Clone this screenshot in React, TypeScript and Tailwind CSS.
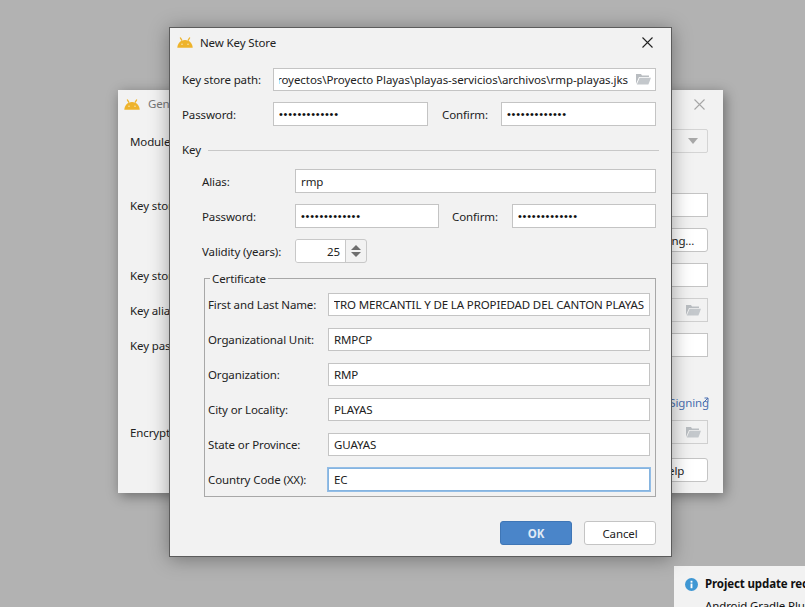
import React from "react";

const font = "font-['Noto_Sans','Open_Sans',sans-serif]";

function Android({ className = "" }: { className?: string }) {
  return (
    <svg viewBox="0 0 16 11" width="16" height="11" className={className}>
      <path d="M0.3 10.7C0.5 6.6 3.5 3 8 3s7.5 3.6 7.7 7.7Z" fill="#eeb32b" />
      <path d="M3.2 0.5 5 3.6M12.8 0.5 11 3.6" stroke="#eeb32b" strokeWidth="1.3" />
      <circle cx="5" cy="7.3" r=".8" fill="#f6e2ae" />
      <circle cx="11" cy="7.3" r=".8" fill="#f6e2ae" />
    </svg>
  );
}

function Close({ color, size = 11 }: { color: string; size?: number }) {
  return (
    <svg viewBox="0 0 11 11" width={size} height={size}>
      <path d="M.5.5l10 10M10.5.5l-10 10" stroke={color} strokeWidth="1.1" />
    </svg>
  );
}

function Folder() {
  return (
    <svg viewBox="0 0 15 12" width="15" height="12">
      <path d="M0 11V1h5l1 1.4h7V4H3L0 11Z" fill="#b9bdc1" />
      <path d="M3.6 4.8H15L12.4 11.5H.8Z" fill="#c4c8cc" />
    </svg>
  );
}

function Field({ children, className = "", focus = false, right = false, tall = true }: { children?: React.ReactNode; className?: string; focus?: boolean; right?: boolean; tall?: boolean }) {
  return (
    <div
      className={`flex items-center ${tall ? "h-[24px] pt-[2px]" : "h-[23px]"} bg-white whitespace-nowrap text-[#222] px-[5px] ${
        focus ? "border border-[#85b4e0] shadow-[0_0_0_1px_#93bde6]" : "border border-[#c4c4c4]"
      } ${className}`}
    >
      <div className={`flex-1 min-w-0 flex overflow-hidden ${right ? "justify-end" : ""}`}>
        <span className="shrink-0">{children}</span>
      </div>
    </div>
  );
}

function Label({ children, className = "", flat = false }: { children: React.ReactNode; className?: string; flat?: boolean }) {
  return <span className={`${flat ? "" : "pt-[2px]"} whitespace-nowrap ${className}`}>{children}</span>;
}

function Dots() {
  return <span className="block -mt-[2px] text-[11px] leading-[14px] tracking-[0.75px] text-[#111] font-['Liberation_Sans',sans-serif]">•••••••••••••</span>;
}

function CertRow({ label, value, focus, right }: { label: string; value: string; focus?: boolean; right?: boolean }) {
  return (
    <div className="flex items-center">
      <Label className="w-[120px]" flat>{label}</Label>
      <Field className="w-[322px]" focus={focus} right={right} tall={false}>{value}</Field>
    </div>
  );
}

function BackRow({ label, mt, children }: { label?: string; mt: string; children?: React.ReactNode }) {
  return (
    <div className={`flex items-center justify-between h-[24px] ${mt}`}>
      <Label>{label}</Label>
      {children}
    </div>
  );
}

function FolderField() {
  return (
    <div className="flex items-center justify-end w-[460px] h-[24px] border border-[#cfcfcf] pr-[6px]">
      <Folder />
    </div>
  );
}

function BackDialog() {
  const btn = "flex items-center justify-center h-[24px] pt-[2px] bg-white border border-[#c4c4c4] rounded-[3px] whitespace-nowrap";
  return (
    <div className="absolute left-[118px] top-[90px] w-[605px] h-[403px] bg-[#f2f2f2] shadow-[2px_3px_12px_rgba(0,0,0,0.4)] text-[#222]">
      <div className="flex items-center h-[28px] pl-[6px] pr-[18px] justify-between">
        <div className="flex items-center gap-[8px] text-[#777]">
          <Android />
          <span>Generate Signed Bundle or APK</span>
        </div>
        <Close color="#a6a6a6" />
      </div>
      <div className="pl-[12px] pr-[15px]">
        <BackRow label="Module" mt="mt-[11px]">
          <div className="flex items-center justify-end w-[460px] h-[24px] border border-[#d4d4d4] rounded-[2px] pr-[9px]">
            <div className="w-0 h-0 border-x-[5px] border-x-transparent border-t-[6px] border-t-[#a8a8a8]" />
          </div>
        </BackRow>
        <BackRow label="Key store path:" mt="mt-[40px]"><Field className="w-[460px]" /></BackRow>
        <div className="flex justify-end mt-[11px]">
          <div className={`${btn} w-[120px]`}>Choose existing...</div>
        </div>
        <BackRow label="Key store password:" mt="mt-[11px]"><Field className="w-[460px]" /></BackRow>
        <BackRow label="Key alias:" mt="mt-[11px]"><FolderField /></BackRow>
        <BackRow label="Key password:" mt="mt-[11px]"><Field className="w-[460px]" /></BackRow>
        <div className="relative flex justify-end items-center h-[20px] mt-[35px] pt-[2px] -mr-[1px] text-[#4a6fb0]">
          Google Play App Signing
          <svg viewBox="0 0 7 7" width="7" height="7" className="absolute right-0 top-[5px]">
            <path d="M1 6 6 1M2.5 1H6V4.5" stroke="#4a6fb0" strokeWidth="1" fill="none" />
          </svg>
        </div>
        <BackRow label="Encrypted key export path:" mt="mt-[8px]"><FolderField /></BackRow>
        <div className="flex justify-end mt-[14px]">
          <div className={`${btn} w-[72px]`}>Help</div>
        </div>
      </div>
    </div>
  );
}

function FrontDialog() {
  return (
    <div className="absolute left-[169px] top-[27px] w-[503px] h-[530px] bg-[#f2f2f2] border border-[#5c5c5c] shadow-[0_2px_18px_rgba(0,0,0,0.35)] text-[#222]">
      <div className="flex items-center justify-between h-[28px] pl-[7px] pr-[18px]">
        <div className="flex items-center gap-[7px]">
          <Android />
          <Label>New Key Store</Label>
        </div>
        <Close color="#222" />
      </div>
      <div className="flex flex-col pl-[12px] pr-[15px] pt-[12px]">
        <div className="flex items-center justify-between">
          <Label flat>Key store path:</Label>
          <div className="relative">
            <Field className="w-[383px] pr-[27px] tracking-[-0.06px]" right tall={false}>
              C:\Users\Usuario\Proyectos\Proyecto Playas\playas-servicios\archivos\rmp-playas.jks
            </Field>
            <span className="absolute right-[5px] top-[5px]"><Folder /></span>
          </div>
        </div>
        <div className="flex items-center mt-[11px]">
          <Label className="w-[91px]">Password:</Label>
          <Field className="w-[155px]"><Dots /></Field>
          <Label className="ml-[14px] w-[59px]">Confirm:</Label>
          <Field className="w-[155px]"><Dots /></Field>
        </div>
        <div className="flex items-center h-[20px] mt-[14px] -mr-[3px]">
          <Label flat>Key</Label>
          <div className="flex-1 h-px bg-[#c8c8c8] ml-[7px]" />
        </div>
        <div className="flex flex-col pl-[20px] mt-[9px]">
          <div className="flex items-center">
            <Label className="w-[93px]">Alias:</Label>
            <Field className="w-[361px]">rmp</Field>
          </div>
          <div className="flex items-center mt-[11px]">
            <Label className="w-[93px]">Password:</Label>
            <Field className="w-[144px]"><Dots /></Field>
            <Label className="ml-[13px] w-[60px]">Confirm:</Label>
            <Field className="w-[144px]"><Dots /></Field>
          </div>
          <div className="flex items-center mt-[11px]">
            <Label className="w-[93px]">Validity (years):</Label>
            <div className="flex items-stretch w-[72px] h-[24px] border border-[#c8c8c8] rounded-[3px] overflow-hidden">
              <div className="w-[49px] bg-white flex items-center justify-end pr-[5px] pt-[2px]">25</div>
              <div className="flex-1 border-l border-[#c8c8c8] flex flex-col items-center justify-center gap-[2px]">
                <div className="w-0 h-0 border-x-[5px] border-x-transparent border-b-[5px] border-b-[#6e6e6e]" />
                <div className="w-0 h-0 border-x-[5px] border-x-transparent border-t-[5px] border-t-[#6e6e6e]" />
              </div>
            </div>
          </div>
          <div className="relative flex flex-col gap-[12px] w-[452px] h-[219px] mt-[15px] -ml-[-2px] border border-[#a8a8a8] pl-[3px] pt-[14px]">
            <span className="absolute left-[5px] -top-[9px] bg-[#f2f2f2] px-[2px] leading-[16px] pt-px">Certificate</span>
            <CertRow label="First and Last Name:" value="REGISTRO MERCANTIL Y DE LA PROPIEDAD DEL CANTON PLAYAS" right />
            <CertRow label="Organizational Unit:" value="RMPCP" />
            <CertRow label="Organization:" value="RMP" />
            <CertRow label="City or Locality:" value="PLAYAS" />
            <CertRow label="State or Province:" value="GUAYAS" />
            <CertRow label="Country Code (XX):" value="EC" focus />
          </div>
        </div>
        <div className="flex justify-end gap-[12px] mt-[24px]">
          <div className="flex items-center justify-center w-[72px] h-[24px] pt-[2px] rounded-[3px] bg-[#4a85c9] border border-[#3f76b6] text-[#dfe9f5] font-bold">OK</div>
          <div className="flex items-center justify-center w-[72px] h-[24px] pt-[2px] rounded-[3px] bg-white border border-[#c4c4c4]">Cancel</div>
        </div>
      </div>
    </div>
  );
}

function Notice() {
  return (
    <div className="absolute left-[674px] top-[566px] w-[131px] h-[41px] bg-[#f2f2f2] overflow-hidden pl-[11px] pt-[10px] text-[#111]">
      <div className="flex items-center gap-[7px] whitespace-nowrap h-[16px]">
        <svg viewBox="0 0 14 14" width="13" height="13" className="shrink-0">
          <circle cx="7" cy="7" r="7" fill="#3f97d3" />
          <rect x="6" y="6" width="2" height="5" fill="#fff" />
          <rect x="6" y="3" width="2" height="2" fill="#fff" />
        </svg>
        <span className="font-bold">Project update recommended</span>
      </div>
      <div className="whitespace-nowrap mt-[5px] ml-[20px]">Android Gradle Plugin</div>
    </div>
  );
}

export default function App() {
  return (
    <div className={`relative w-[805px] h-[607px] bg-[#b2b2b2] overflow-hidden text-[11.5px] tracking-[-0.12px] ${font}`}>
      <BackDialog />
      <Notice />
      <FrontDialog />
    </div>
  );
}
